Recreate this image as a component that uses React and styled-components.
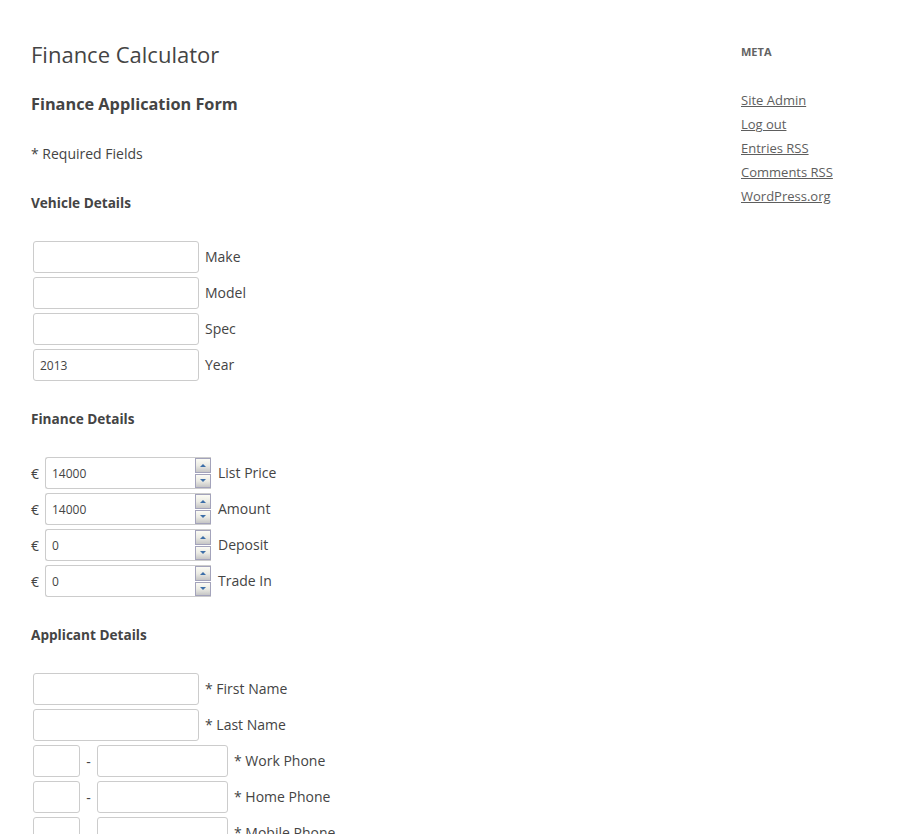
import styled, { createGlobalStyle } from "styled-components";

const GlobalStyle = createGlobalStyle`
  body {
    margin: 0;
    background: #fff;
    color: #444;
    font-family: "Open Sans", "Liberation Sans", sans-serif;
    font-size: 14px;
  }
`;

const Page = styled.div`
  display: grid;
  grid-template-columns: 710px 1fr;
  padding: 41px 0 0 31px;
`;

const Main = styled.main`
  display: flex;
  flex-direction: column;
`;

const Title = styled.h1`
  margin: 0;
  font-size: 22px;
  line-height: 26px;
  font-weight: normal;
  color: #444;
`;

const FormTitle = styled.h2`
  margin: 25px 0 0;
  font-size: 16.3px;
  line-height: 24px;
  font-weight: bold;
`;

const Note = styled.p`
  margin: 26px 0 0;
  font-size: 14px;
  line-height: 24px;
`;

const SectionTitle = styled.h3`
  margin: ${(p) => (p.$first ? "25px" : "26px")} 0 0;
  font-size: 13.6px;
  line-height: 24px;
  font-weight: bold;
`;

const Rows = styled.div`
  display: flex;
  flex-direction: column;
  gap: 4px;
  margin-top: 26px;
`;

const Row = styled.div`
  display: flex;
  align-items: center;
  height: 32px;
  padding-left: ${(p) => (p.$currency ? "0" : "2px")};
`;

const TextInput = styled.input`
  box-sizing: border-box;
  width: ${(p) => p.$w || 166}px;
  height: 32px;
  padding: 6px;
  border: 1px solid #ccc;
  border-radius: 3px;
  font-family: "Open Sans", "Liberation Sans", sans-serif;
  font-size: 12px;
  color: #444;
  background: #fff;
  outline: none;
`;

const Label = styled.span`
  margin-left: ${(p) => p.$gap || 6}px;
  margin-top: -1px;
  font-size: 14px;
  color: #444;
`;

const Euro = styled.span`
  width: 14px;
  font-size: 14px;
`;

const NumberBox = styled.div`
  box-sizing: border-box;
  display: flex;
  align-items: stretch;
  width: 166px;
  height: 32px;
  border: 1px solid #ccc;
  border-radius: 3px 0 0 3px;
  border-right: none;
`;

const NumberField = styled.input`
  flex: 1;
  min-width: 0;
  border: none;
  padding: 0 6px;
  font-family: "Open Sans", "Liberation Sans", sans-serif;
  font-size: 12px;
  color: #444;
  outline: none;
  background: transparent;
`;

const Spin = styled.div`
  display: flex;
  flex-direction: column;
  gap: 1px;
  width: 16px;
  margin-left: 2px;
`;

const SpinButton = styled.div`
  box-sizing: border-box;
  flex: 1;
  display: flex;
  align-items: center;
  justify-content: center;
  border: 1px solid #a3a3bb;
  background: linear-gradient(#fbfbf4, #ebebe4 50%, #c6c6c6);
  &::after {
    content: "";
    border-left: 3px solid transparent;
    border-right: 3px solid transparent;
    ${(p) =>
      p.$down
        ? "border-top: 3px solid #3d6fa8;"
        : "border-bottom: 3px solid #3d6fa8;"}
  }
`;

const Dash = styled.span`
  width: 17px;
  text-align: center;
  font-size: 14px;
`;

const Sidebar = styled.aside`
  margin-top: -1px;
`;

const WidgetTitle = styled.h3`
  margin: 0;
  font-size: 11px;
  line-height: 24px;
  font-weight: bold;
  text-transform: uppercase;
  color: #636363;
`;

const LinkList = styled.ul`
  list-style: none;
  margin: 24px 0 0;
  padding: 0;
`;

const LinkItem = styled.li`
  font-size: 13px;
  line-height: 24px;
  & a {
    color: #5e5e5e;
    text-decoration: underline;
  }
`;

const NumberInput = ({ value }) => (
  <NumberBox>
    <NumberField defaultValue={value} />
    <Spin>
      <SpinButton />
      <SpinButton $down />
    </Spin>
  </NumberBox>
);

const vehicle = [
  ["Make", ""],
  ["Model", ""],
  ["Spec", ""],
  ["Year", "2013"],
];

const finance = [
  ["List Price", "14000"],
  ["Amount", "14000"],
  ["Deposit", "0"],
  ["Trade In", "0"],
];

const phones = ["* Work Phone", "* Home Phone", "* Mobile Phone"];

const links = ["Site Admin", "Log out", "Entries RSS", "Comments RSS", "WordPress.org"];

export default function App() {
  return (
    <>
      <GlobalStyle />
      <Page>
        <Main>
          <Title>Finance Calculator</Title>
          <FormTitle>Finance Application Form</FormTitle>
          <Note>* Required Fields</Note>

          <SectionTitle $first>Vehicle Details</SectionTitle>
          <Rows>
            {vehicle.map(([label, value]) => (
              <Row key={label}>
                <TextInput defaultValue={value} />
                <Label>{label}</Label>
              </Row>
            ))}
          </Rows>

          <SectionTitle>Finance Details</SectionTitle>
          <Rows>
            {finance.map(([label, value]) => (
              <Row key={label} $currency>
                <Euro>€</Euro>
                <NumberInput value={value} />
                <Label $gap={7}>{label}</Label>
              </Row>
            ))}
          </Rows>

          <SectionTitle>Applicant Details</SectionTitle>
          <Rows>
            <Row>
              <TextInput />
              <Label>* First Name</Label>
            </Row>
            <Row>
              <TextInput />
              <Label>* Last Name</Label>
            </Row>
            {phones.map((label) => (
              <Row key={label}>
                <TextInput $w={47} />
                <Dash>-</Dash>
                <TextInput $w={131} />
                <Label>{label}</Label>
              </Row>
            ))}
          </Rows>
        </Main>

        <Sidebar>
          <WidgetTitle>Meta</WidgetTitle>
          <LinkList>
            {links.map((l) => (
              <LinkItem key={l}>
                <a href="#">{l}</a>
              </LinkItem>
            ))}
          </LinkList>
        </Sidebar>
      </Page>
    </>
  );
}
